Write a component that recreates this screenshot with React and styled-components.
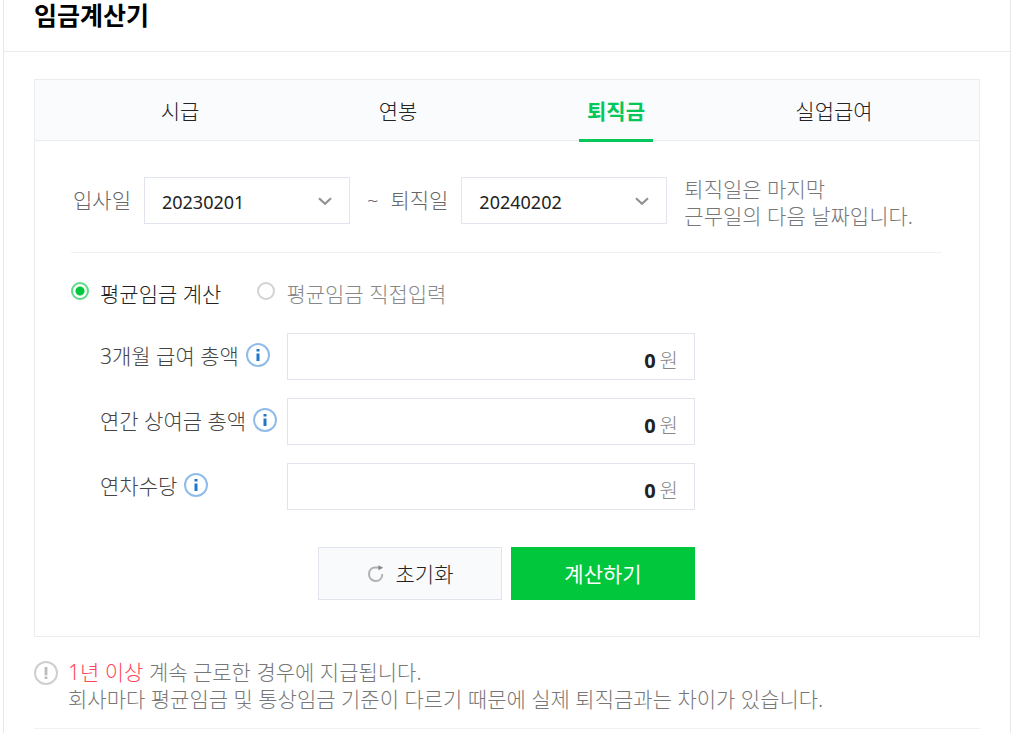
import styled, { createGlobalStyle } from "styled-components";
import { useState } from "react";

const tabs = ["시급", "연봉", "퇴직금", "실업급여"];

const fields = [
  { id: "salary", label: "3개월 급여 총액" },
  { id: "bonus", label: "연간 상여금 총액" },
  { id: "leave", label: "연차수당" },
];

const emptyValues = { salary: "0", bonus: "0", leave: "0" };

function InfoIcon() {
  return (
    <svg width="24" height="24" viewBox="0 0 24 24" aria-hidden="true">
      <circle cx="12" cy="12" r="11" fill="#fff" stroke="#8fbceb" strokeWidth="2" />
      <path d="M10.5 6h3v2.6h-3zM10.5 10.4h3V18h-3z" fill="#1f76cc" />
    </svg>
  );
}

function NoticeIcon() {
  return (
    <svg width="24" height="24" viewBox="0 0 24 24" aria-hidden="true">
      <circle cx="12" cy="12" r="11" fill="none" stroke="#cfcfcf" strokeWidth="2" />
      <path d="M10.6 6h2.8v8.2h-2.8zM10.6 15.6h2.8V18h-2.8z" fill="#bbb" />
    </svg>
  );
}

function ResetIcon() {
  return (
    <svg width="18" height="18" viewBox="0 0 18 18" aria-hidden="true">
      <path
        d="M12.5 2.6H8.4C4.3 2.6 2 5.4 2 9.2c0 3.9 2.8 6.8 6.6 6.8 3.9 0 6.7-2.9 6.7-7"
        fill="none"
        stroke="#aeb0b2"
        strokeWidth="2"
      />
      <path d="M11.4 0.2v5l4.8-2.5z" fill="#85878a" />
    </svg>
  );
}

function DateSelect({ id, label, value, options, onChange }) {
  return (
    <>
      <DateLabel htmlFor={id}>{label}</DateLabel>
      <SelectBox>
        <select id={id} value={value} onChange={(e) => onChange(e.target.value)}>
          {options.map((option) => (
            <option key={option}>{option}</option>
          ))}
        </select>
        <svg width="14" height="9" viewBox="0 0 14 9" aria-hidden="true">
          <path d="M1 1.2l6 5.6 6-5.6" fill="none" stroke="#929292" strokeWidth="2.2" />
        </svg>
      </SelectBox>
    </>
  );
}

function App() {
  const [tab, setTab] = useState("퇴직금");
  const [start, setStart] = useState("20230201");
  const [end, setEnd] = useState("20240202");
  const [mode, setMode] = useState("calc");
  const [values, setValues] = useState(emptyValues);

  return (
    <>
      <GlobalStyles />
      <Container>
        <Header>
          <h1>임금계산기</h1>
        </Header>
        <Content>
          <Card>
            <Tabs role="tablist">
              {tabs.map((name) => (
                <Tab
                  key={name}
                  type="button"
                  role="tab"
                  aria-selected={tab === name}
                  $active={tab === name}
                  onClick={() => setTab(name)}
                >
                  <span>{name}</span>
                </Tab>
              ))}
            </Tabs>
            <Form onSubmit={(e) => e.preventDefault()}>
              <DateRow>
                <DateSelect
                  id="start"
                  label="입사일"
                  value={start}
                  options={["20230201", "20230202"]}
                  onChange={setStart}
                />
                <Tilde>~</Tilde>
                <DateSelect
                  id="end"
                  label="퇴직일"
                  value={end}
                  options={["20240201", "20240202"]}
                  onChange={setEnd}
                />
                <DateHelp>
                  퇴직일은 마지막
                  <br />
                  근무일의 다음 날짜입니다.
                </DateHelp>
              </DateRow>

              <RadioRow>
                <RadioLabel $checked={mode === "calc"}>
                  <input
                    type="radio"
                    name="mode"
                    checked={mode === "calc"}
                    onChange={() => setMode("calc")}
                  />
                  <span>평균임금 계산</span>
                </RadioLabel>
                <RadioLabel $checked={mode === "direct"}>
                  <input
                    type="radio"
                    name="mode"
                    checked={mode === "direct"}
                    onChange={() => setMode("direct")}
                  />
                  <span>평균임금 직접입력</span>
                </RadioLabel>
              </RadioRow>

              <Fields>
                {fields.map(({ id, label }) => (
                  <Field key={id}>
                    <FieldName>
                      <label htmlFor={id}>{label}</label>
                      <InfoButton type="button" aria-label={`${label} 도움말`}>
                        <InfoIcon />
                      </InfoButton>
                    </FieldName>
                    <MoneyBox>
                      <input
                        id={id}
                        type="text"
                        inputMode="numeric"
                        value={values[id]}
                        onChange={(e) => setValues({ ...values, [id]: e.target.value })}
                      />
                      <span>원</span>
                    </MoneyBox>
                  </Field>
                ))}
                <Actions>
                  <ActionButton type="button" onClick={() => setValues(emptyValues)}>
                    <ResetIcon />
                    <span>초기화</span>
                  </ActionButton>
                  <ActionButton type="submit" $primary>
                    <span>계산하기</span>
                  </ActionButton>
                </Actions>
              </Fields>
            </Form>
          </Card>

          <Notice>
            <NoticeIcon />
            <p>
              <em>1년 이상</em> 계속 근로한 경우에 지급됩니다.
              <br />
              회사마다 평균임금 및 통상임금 기준이 다르기 때문에 실제 퇴직금과는 차이가 있습니다.
            </p>
          </Notice>
        </Content>
      </Container>
    </>
  );
}

const GlobalStyles = createGlobalStyle`
  * {
    box-sizing: border-box;
  }

  body {
    margin: 0;
    background: #fff;
    color: #222;
    font-family: "Noto Sans", "Noto Sans CJK KR", sans-serif;
    font-size: 21px;
    font-weight: 300;
    line-height: 27px;
  }

  button, input, select {
    font: inherit;
    color: inherit;
  }

  button {
    cursor: pointer;
  }

  svg {
    flex: none;
  }
`;

const Container = styled.main`
  min-height: 100vh;
  margin: 0 22px 0 3px;
  border: solid #e8e8e8;
  border-width: 0 1px;
`;

const Header = styled.header`
  padding: 0 30px 21px;
  border-bottom: 1px solid #ebebeb;

  h1 {
    margin: 0;
    color: #000;
    font-size: 25px;
    font-weight: 700;
    line-height: 30px;
  }
`;

const Content = styled.div`
  padding: 27px 30px 0;
`;

const Card = styled.section`
  border: 1px solid #ececee;
`;

const Tabs = styled.div`
  display: grid;
  grid-template-columns: repeat(4, 1fr);
  padding: 0 36px;
  background: #fafbfd;
  border-bottom: 1px solid #e9ecf1;
`;

const Tab = styled.button`
  display: flex;
  justify-content: center;
  height: 60px;
  padding: 0;
  border: 0;
  background: none;
  color: ${({ $active }) => ($active ? "#03c75a" : "#222")};
  font-weight: ${({ $active }) => ($active ? 700 : 300)};

  span {
    height: 62px;
    padding: 0 8px;
    border-bottom: 3px solid ${({ $active }) => ($active ? "#03c75a" : "transparent")};
    line-height: 62px;
  }
`;

const Form = styled.form`
  padding: 29px 37px 36px 36px;
`;

const DateRow = styled.div`
  display: flex;
  align-items: center;
  padding-bottom: 22px;
  border-bottom: 1px solid #eff1f5;
  color: #666;
`;

const DateLabel = styled.label`
  margin: 0 13px 0 2px;
  white-space: nowrap;
`;

const SelectBox = styled.div`
  position: relative;
  flex: 0 1 206px;

  select {
    display: block;
    width: 100%;
    height: 47px;
    padding: 4px 40px 0 17px;
    border: 1px solid #e1e4ec;
    border-radius: 0;
    background: #fff;
    color: #222;
    font-size: 18px;
    font-weight: 400;
    appearance: none;
  }

  svg {
    position: absolute;
    top: 20px;
    right: 18px;
    pointer-events: none;
  }
`;

const Tilde = styled.span`
  margin: 0 10px 0 17px;
  font-size: 20px;
`;

const DateHelp = styled.p`
  margin: 6px 0 0 17px;
  color: #777;
  white-space: nowrap;
`;

const RadioRow = styled.div`
  display: flex;
  gap: 36px;
  padding: 28px 0 25px;
`;

const RadioLabel = styled.label`
  display: flex;
  align-items: flex-start;
  gap: 11px;
  color: ${({ $checked }) => ($checked ? "#222" : "#888")};

  input {
    width: 18px;
    height: 18px;
    margin: 1px 0 0;
    border: 2px solid ${({ $checked }) => ($checked ? "#5bdb83" : "#d2d2d2")};
    border-radius: 50%;
    background: ${({ $checked }) =>
      $checked ? "radial-gradient(circle, #00c73c 4px, #fff 5px)" : "#fff"};
    appearance: none;
  }
`;

const Fields = styled.div`
  display: grid;
  gap: 18px;
  max-width: 624px;
`;

const Field = styled.div`
  display: grid;
  grid-template-columns: 187px 1fr;
  padding-left: 29px;
`;

const FieldName = styled.div`
  display: flex;
  align-items: center;
  gap: 7px;
  color: #444;
  white-space: nowrap;
`;

const InfoButton = styled.button`
  display: flex;
  padding: 0;
  margin-bottom: 4px;
  border: 0;
  background: none;
`;

const MoneyBox = styled.div`
  display: flex;
  align-items: center;
  gap: 4px;
  height: 47px;
  padding: 8px 16px 0;
  border: 1px solid #e1e4ec;
  color: #888;

  input {
    flex: 1;
    min-width: 0;
    padding: 0;
    border: 0;
    outline: 0;
    background: none;
    color: #222;
    font-size: 20px;
    font-weight: 700;
    text-align: right;
  }

  span {
    font-size: 20px;
  }
`;

const Actions = styled.div`
  display: flex;
  justify-content: flex-end;
  gap: 9px;
  padding-top: 19px;
`;

const ActionButton = styled.button`
  display: flex;
  align-items: center;
  justify-content: center;
  gap: 11px;
  width: 184px;
  height: 53px;
  padding: 0;
  border: 1px solid ${({ $primary }) => ($primary ? "#00c73c" : "#e1e4ec")};
  background: ${({ $primary }) => ($primary ? "#00c73c" : "#f9fafc")};
  color: ${({ $primary }) => ($primary ? "#fff" : "#222")};
  font-weight: ${({ $primary }) => ($primary ? 400 : 300)};

  span {
    padding-top: 2px;
  }
`;

const Notice = styled.div`
  display: flex;
  gap: 10px;
  padding: 24px 0 15px;
  border-bottom: 1px solid #eff1f5;
  color: #777;

  p {
    margin: -2px 0 0;
  }

  em {
    color: #ff4757;
    font-style: normal;
  }
`;

export default App;
